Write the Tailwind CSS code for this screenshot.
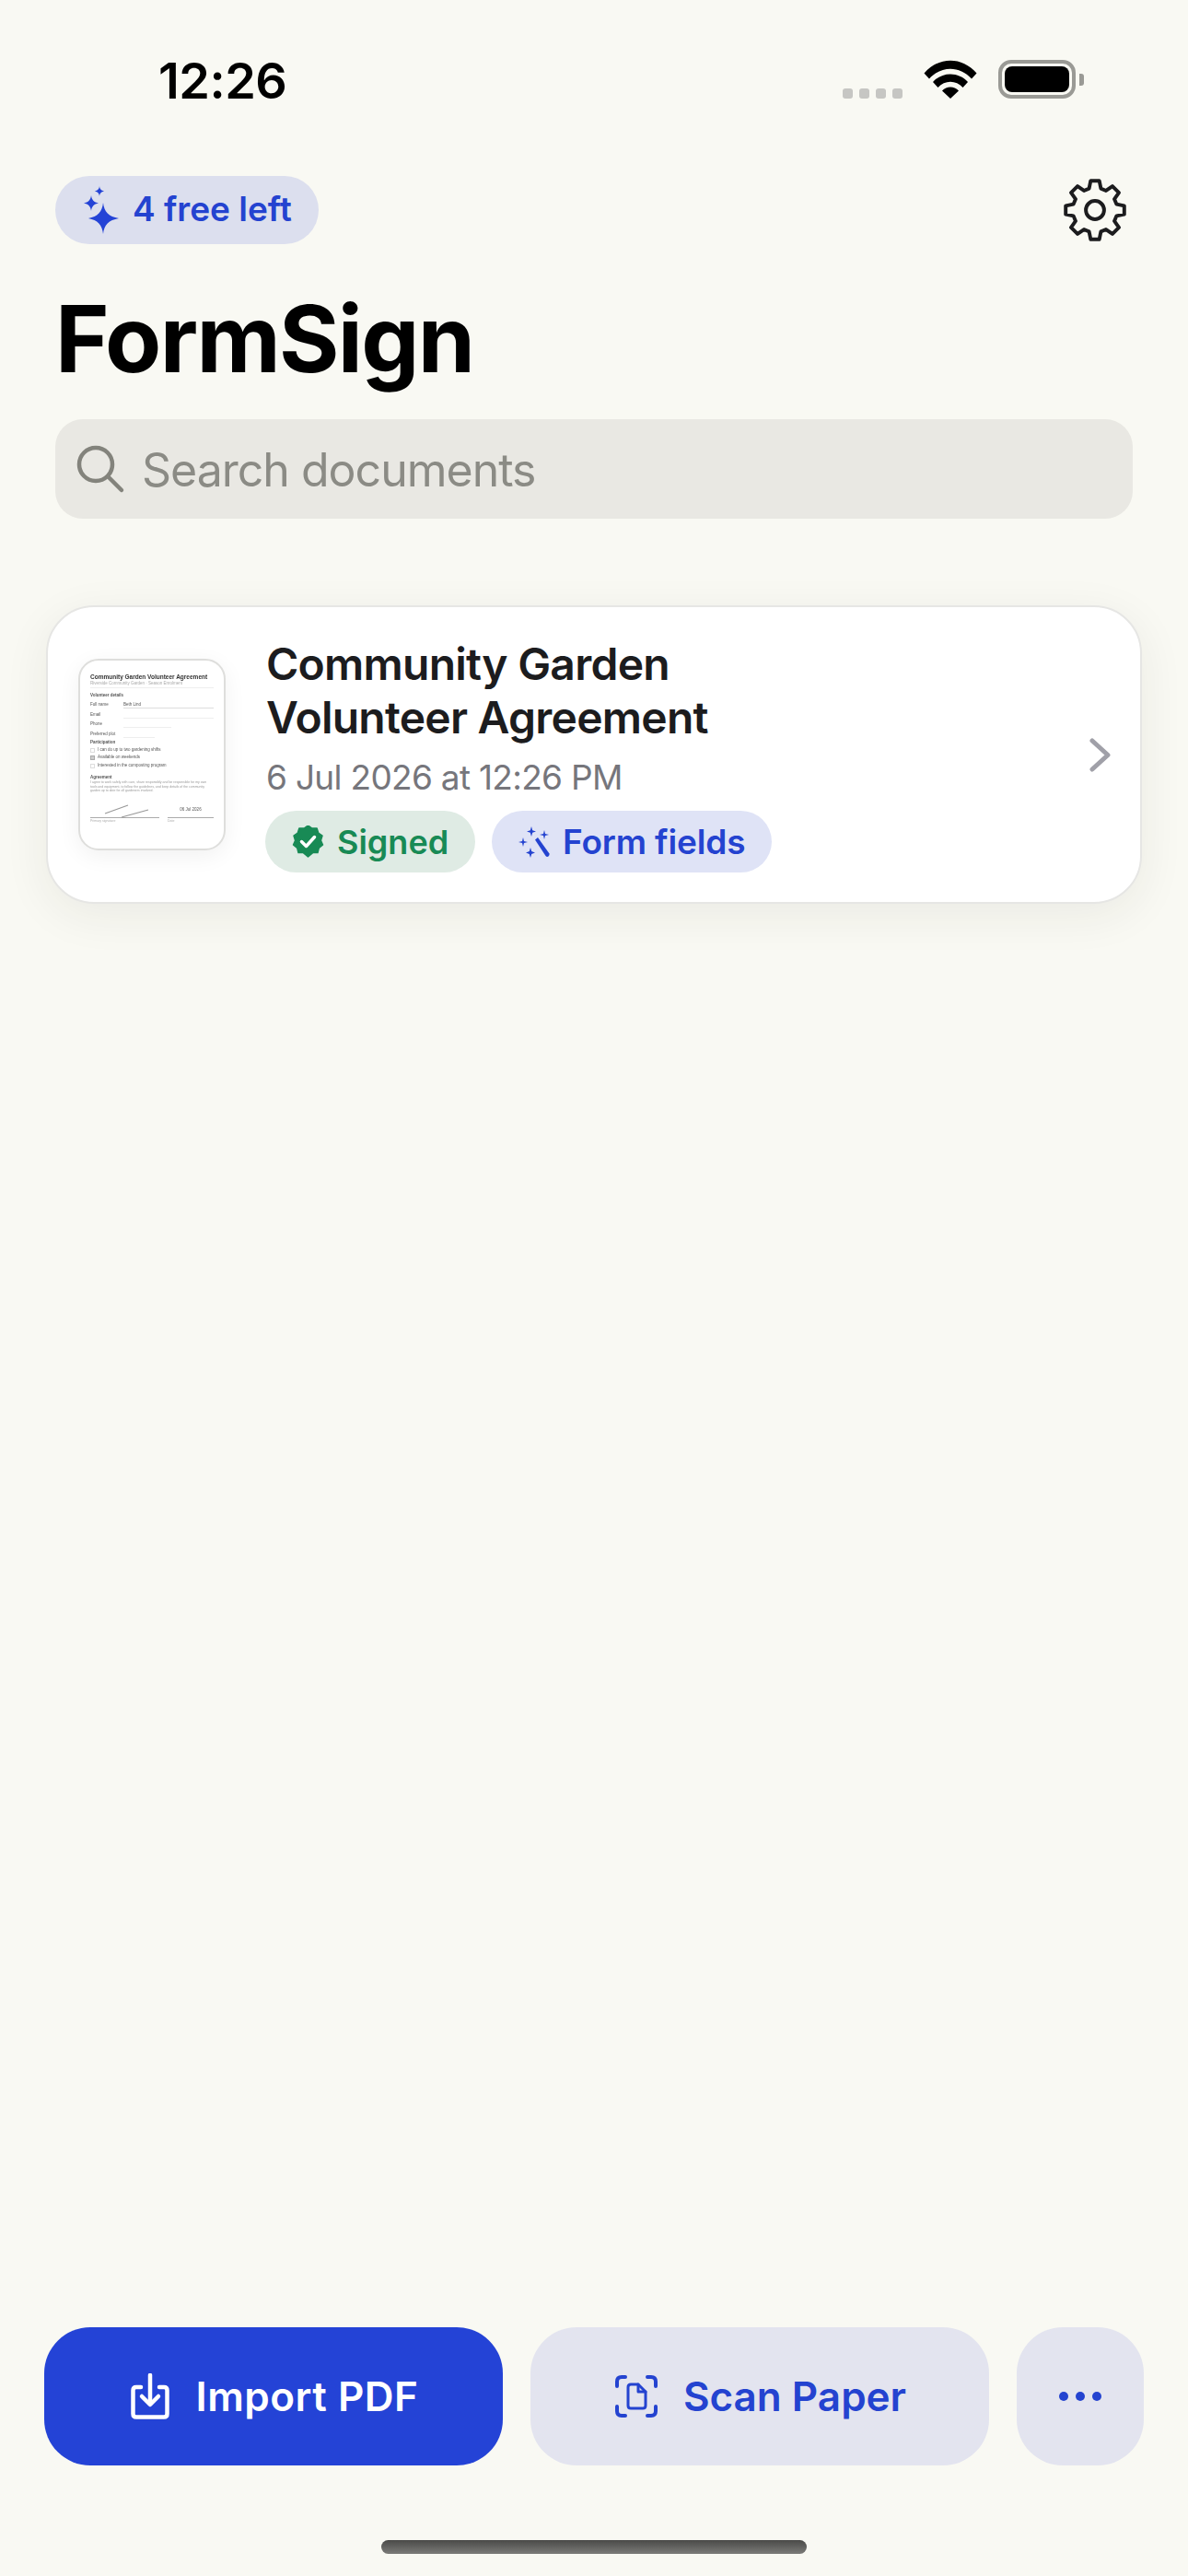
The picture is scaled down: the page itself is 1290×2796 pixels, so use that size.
<!doctype html>
<html>
<head>
<meta charset="utf-8">
<script src="https://cdn.jsdelivr.net/npm/@tailwindcss/browser@4"></script>
</head>
<body class="bg-[#f9f9f3] [font-family:Inter,sans-serif]">
<div class="w-[1290px] h-[2796px] flex flex-col overflow-hidden">
  <!-- status bar -->
  <div class="h-[191px] shrink-0 pt-[62px] pl-[172px] pr-[113px] flex justify-between items-start">
    <span class="text-[54px] leading-[52px] font-semibold text-black tracking-[-0.5px]">12:26</span>
    <div class="flex items-start pt-[3px]">
      <div class="flex gap-[7px] mt-[31px]">
        <span class="w-[11px] h-[11px] rounded-[3px] bg-[#c6c6c3]"></span>
        <span class="w-[11px] h-[11px] rounded-[3px] bg-[#c6c6c3]"></span>
        <span class="w-[11px] h-[11px] rounded-[3px] bg-[#c6c6c3]"></span>
        <span class="w-[11px] h-[11px] rounded-[3px] bg-[#c6c6c3]"></span>
      </div>
      <svg class="ml-[23px]" width="58" height="42" viewBox="0 0 58 42">
        <path d="M0.5 14.5 C16 -4 42 -4 57.5 14.5 L52 20.5 C39 6 19 6 6 20.5 Z" fill="#000"/>
        <path d="M10 24 C20 12.5 38 12.5 48 24 L42.5 30 C35 21.5 23 21.5 15.5 30 Z" fill="#000"/>
        <path d="M20 33.5 C25 28 33 28 38 33.5 L29 42 Z" fill="#000"/>
      </svg>
      <div class="ml-[23px] w-[84px] h-[42px] rounded-[14px] border-[4px] border-[#9a9a95] p-[3px]">
        <div class="w-full h-full rounded-[8px] bg-black"></div>
      </div>
      <div class="ml-[4px] mt-[15px] w-[5px] h-[13px] rounded-r-[3px] bg-[#9a9a95]"></div>
    </div>
  </div>

  <!-- header row -->
  <div class="pl-[60px] pr-[66px] flex justify-between items-center h-[74px] shrink-0">
    <div class="h-[74px] w-[286px] rounded-full bg-[#dcdfee] flex items-center pl-[31px] gap-[15px]">
      <svg width="38" height="52" viewBox="0 0 38 52" fill="#2443d6">
        <path d="M21 18 C22 28 27 33 38 35 C27 37 22 42 21 52 C20 42 15 37 5 35 C15 33 20 28 21 18 Z"/>
        <path d="M8 10 C8.500 15 11 17.500 16 18.500 C11 19.500 8.500 22 8 27 C7.500 22 5 19.500 0 18.500 C5 17.500 7.500 15 8 10 Z"/>
        <path d="M17 0 C17.300 3 18.500 4.500 22 5.500 C18.500 6.500 17.300 8 17 11 C16.700 8 15.500 6.500 12 5.500 C15.500 4.500 16.700 3 17 0 Z"/>
      </svg>
      <span class="text-[37px] leading-[40px] mt-[-3px] font-semibold text-[#2443d0]">4 free left</span>
    </div>
    <svg width="70" height="70" viewBox="0 0 24 24" fill="none" stroke="#1c1c1e" stroke-width="1.35" stroke-linejoin="round">
      <g transform="translate(12 12)">
        <polygon points="-2.2,-8 -1.6,-10.9 1.6,-10.9 2.2,-8 4.1,-7.21 6.5,-8.9 8.9,-6.5 7.21,-4.1 8,-2.2 10.9,-1.6 10.9,1.6 8,2.2 7.21,4.1 8.9,6.5 6.5,8.9 4.1,7.21 2.2,8 1.6,10.9 -1.6,10.9 -2.2,8 -4.1,7.21 -6.5,8.9 -8.9,6.5 -7.21,4.1 -8,2.2 -10.9,1.6 -10.9,-1.6 -8,-2.2 -7.21,-4.1 -8.9,-6.5 -6.5,-8.9 -4.1,-7.21"/>
        <circle cx="0" cy="0" r="3.4"/>
      </g>
    </svg>
  </div>

  <h1 class="pl-[60px] mt-[48px] text-[100px] leading-[110px] font-bold text-black tracking-[-1.7px]">FormSign</h1>

  <!-- search -->
  <div class="mx-[60px] mt-[32px] h-[108px] shrink-0 rounded-[30px] bg-[#e9e8e3] flex items-center pl-[22px] gap-[18px]">
    <svg width="54" height="54" viewBox="0 0 54 54" fill="none" stroke="#83837c" stroke-width="4.500" stroke-linecap="round">
      <circle cx="22" cy="22" r="18"/>
      <path d="M35 35 L50 50"/>
    </svg>
    <span class="text-[50px] tracking-[-1px] mt-[2px] text-[#8b8b85]">Search documents</span>
  </div>

  <!-- card -->
  <div class="mx-[50px] mt-[94px] h-[324px] shrink-0 rounded-[52px] bg-white border-[2px] border-[#e6e6e4] shadow-[0_12px_50px_rgba(40,40,30,0.07)] flex items-center pl-[33px] pr-[32px]">
    <!-- thumbnail -->
    <div class="w-[160px] h-[208px] shrink-0 rounded-[22px] border-[2px] border-[#dededc] bg-white shadow-[0_6px_24px_rgba(0,0,0,0.06)] overflow-hidden">
    <div class="px-[11px] pt-[14px] flex flex-col text-[#555] text-[4.5px] leading-[6px] [font-family:'Liberation_Sans',sans-serif] blur-[0.4px]">
      <div class="text-[6.500px] leading-[8px] font-bold text-[#333] whitespace-nowrap">Community Garden Volunteer Agreement</div>
      <div class="text-[#aaa] border-b border-[#eee] pb-[1px] whitespace-nowrap">Riverside Community Garden · Season Enrolment</div>
      <div class="mt-[5px] font-bold">Volunteer details</div>
      <div class="mt-[4px] flex"><span class="w-[36px]">Full name</span><span class="flex-1 border-b border-[#ddd]">Beth Lind</span></div>
      <div class="mt-[4px] flex"><span class="w-[36px]">Email</span><span class="flex-1 border-b border-[#eee]">&nbsp;</span></div>
      <div class="mt-[3px] flex"><span class="w-[36px]">Phone</span><span class="w-[52px] border-b border-[#eee]">&nbsp;</span></div>
      <div class="mt-[4px] flex"><span class="w-[36px]">Preferred plot</span><span class="w-[34px] border-b border-[#eee]">&nbsp;</span></div>
      <div class="mt-[2px] font-bold">Participation</div>
      <div class="mt-[2px] flex items-center gap-[3px]"><span class="w-[5px] h-[5px] border border-[#ddd]"></span>I can do up to two gardening shifts</div>
      <div class="mt-[2px] flex items-center gap-[3px]"><span class="w-[5px] h-[5px] border border-[#aaa] bg-[#ccc]"></span>Available on weekends</div>
      <div class="mt-[3px] flex items-center gap-[3px]"><span class="w-[5px] h-[5px] border border-[#ddd]"></span>Interested in the composting program</div>
      <div class="mt-[7px] font-bold">Agreement</div>
      <div class="text-[3.500px] leading-[4.500px] text-[#999]">I agree to work safely with care, share responsibly and be responsible for my own tools and equipment, to follow the guidelines, and keep details of the community garden up to date for all gardeners involved.</div>
      <div class="mt-[15px] flex gap-[9px]">
        <div class="w-[75px] h-[12px] border-b border-[#aaa] relative">
          <svg class="absolute left-0 top-[-7px]" width="75" height="19" viewBox="0 0 75 19" fill="none" stroke="#999" stroke-width="1.2"><path d="M16 14 L41 5"/><path d="M34 18 L63 10"/></svg>
        </div>
        <div class="flex-1 h-[12px] border-b border-[#aaa] text-center text-[4.500px]">06 Jul 2026</div>
      </div>
      <div class="flex gap-[9px] text-[#aaa] text-[3.500px]"><span class="w-[75px]">Primary signature</span><span>Date</span></div>
    </div>
    </div>

    <!-- text -->
    <div class="ml-[44px] flex-1 flex flex-col mt-[1px]">
      <div class="text-[48px] leading-[58px] font-semibold tracking-[-0.75px] text-[#1c1c1e]">Community Garden<br>Volunteer Agreement</div>
      <div class="mt-[14px] text-[37px] leading-[44px] tracking-[-0.7px] text-[#76767c]">6 Jul 2026 at 12:26 PM</div>
      <div class="mt-[14px] ml-[-1px] flex gap-[18px]">
        <div class="h-[67px] w-[228px] rounded-full bg-[#dfebe4] flex items-center pl-[29px] gap-[14px]">
          <svg width="35" height="35" viewBox="0 0 35 35">
            <path fill="#188a55" d="M17.500 0 L21.800 3.100 L27.100 2.900 L28.700 8 L33 11 L31.400 16.200 L33.500 21 L29.300 24.300 L28 29.500 L22.600 29.600 L17.500 34 L12.400 29.600 L7 29.500 L5.700 24.300 L1.500 21 L3.600 16.200 L2 11 L6.300 8 L7.900 2.900 L13.200 3.100 Z" stroke="#188a55" stroke-width="1.500" stroke-linejoin="round"/>
            <path d="M10.500 17.500 L15.500 22.500 L24.500 12.500" fill="none" stroke="#fff" stroke-width="3.500" stroke-linecap="round" stroke-linejoin="round"/>
          </svg>
          <span class="text-[36px] font-semibold text-[#188a55]">Signed</span>
        </div>
        <div class="h-[67px] w-[304px] rounded-full bg-[#dfe3f6] flex items-center pl-[29px] gap-[14px]">
          <svg width="34" height="34" viewBox="0 0 34 34" fill="#2443d0">
            <path d="M14 0 L15.200 4.300 L19 5.500 L15.200 6.700 L14 11 L12.800 6.700 L9 5.500 L12.800 4.300 Z"/>
            <path d="M28 4 L29 8 L33 9 L29 10 L28 14 L27 10 L23 9 L27 8 Z"/>
            <path d="M5 12 L6 16 L10 17 L6 18 L5 22 L4 18 L0 17 L4 16 Z"/>
            <path d="M13 23 L14.200 27 L18 28.500 L14.200 30 L13 34 L11.800 30 L8 28.500 L11.800 27 Z"/>
            <path d="M18 14.500 L21 12 L33.500 29.500 Q34 31 32.500 32.500 Q31 33.500 29.500 32 Z"/>
          </svg>
          <span class="text-[37px] font-semibold tracking-[-0.15px] text-[#2443d0]">Form fields</span>
        </div>
      </div>
    </div>

    <svg width="23" height="37" viewBox="0 0 23 37" fill="none" stroke="#a0a0a8" stroke-width="5" stroke-linecap="round" stroke-linejoin="round">
      <path d="M3 3 L20 18.500 L3 34"/>
    </svg>
  </div>

  <!-- bottom -->
  <div class="flex-1"></div>
  <div class="ml-[48px] mr-[48px] h-[150px] shrink-0 flex gap-[30px]">
    <div class="w-[498px] rounded-[50px] bg-[#2443d6] flex items-center justify-center gap-[29px] pl-[2px]">
      <svg width="42" height="50" viewBox="0 0 42 50" fill="none" stroke="#fff" stroke-width="4.500" stroke-linecap="round" stroke-linejoin="round">
        <path d="M11 15 H6 Q2.500 15 2.500 18.500 V44 Q2.500 47.500 6 47.500 H36 Q39.500 47.500 39.500 44 V18.500 Q39.500 15 36 15 H31"/>
        <path d="M21 2 V33"/>
        <path d="M12 25 L21 34 L30 25"/>
      </svg>
      <span class="text-[44px] font-semibold tracking-[0.5px] text-white">Import PDF</span>
    </div>
    <div class="w-[498px] rounded-[50px] bg-[#e3e4ef] flex items-center justify-center gap-[28px] pl-[2px]">
      <svg width="46" height="46" viewBox="0 0 46 46" fill="none" stroke="#2443d0" stroke-linecap="round" stroke-linejoin="round">
        <g stroke-width="4">
          <path d="M2 12 V7 Q2 2 7 2 H11"/>
          <path d="M35 2 H39 Q44 2 44 7 V12"/>
          <path d="M44 34 V39 Q44 44 39 44 H35"/>
          <path d="M11 44 H7 Q2 44 2 39 V34"/>
        </g>
        <g stroke-width="3">
          <path d="M14 13 Q14 10 17 10 H25 L33 18 V33 Q33 36 30 36 H17 Q14 36 14 33 Z"/>
          <path d="M25 10 V18 H33"/>
        </g>
      </svg>
      <span class="text-[44px] font-semibold text-[#2443d0]">Scan Paper</span>
    </div>
    <div class="flex-1 rounded-[50px] bg-[#e3e4ef] flex items-center justify-center gap-[8px]">
      <span class="w-[10px] h-[10px] rounded-full bg-[#2443d0]"></span>
      <span class="w-[10px] h-[10px] rounded-full bg-[#2443d0]"></span>
      <span class="w-[10px] h-[10px] rounded-full bg-[#2443d0]"></span>
    </div>
  </div>
  <div class="mt-[81px] mb-[24px] mx-auto w-[462px] h-[15px] shrink-0 rounded-full bg-gradient-to-b from-[#4a4a48] to-[#7c7c79]"></div>
</div>
</body>
</html>
